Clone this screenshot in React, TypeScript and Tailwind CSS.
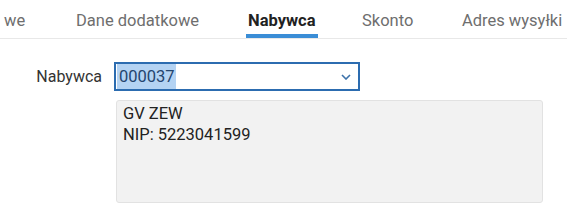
import * as React from "react";

const tabs = [
  { label: "Dane dodatkowe", width: "w-[172px]", active: false },
  { label: "Nabywca", width: "w-[114px]", active: true },
  { label: "Skonto", width: "w-[100px]", active: false },
  { label: "Adres wysyłki", width: "w-[105px]", active: false },
];

export default function App() {
  return (
    <div className="h-[213px] w-[567px] overflow-hidden bg-white font-['Roboto',sans-serif] text-[16.5px]">
      <div className="flex overflow-hidden whitespace-nowrap border-b border-[#e8e8e8]">
        <div className="w-[76px] shrink-0 pl-[4px]">
          <Tab label="we" />
        </div>
        {tabs.map((t) => (
          <div key={t.label} className={t.width + " shrink-0"}>
            <Tab label={t.label} active={t.active} />
          </div>
        ))}
      </div>

      <div className="mt-[23px]">
        <div className="flex items-center">
          <div className="w-[114px] shrink-0 pr-[12px] text-right text-[16px] text-[#333]">Nabywca</div>
          <div className="flex h-[29px] w-[246px] items-center border-2 border-[#2c6cb0] bg-white pl-[1px] pr-[7px]">
            <span className="bg-[#b4d3f3] pl-[2px] pr-[1px] leading-[25px] text-[#24456f]">000037</span>
            <span className="flex-1" />
            <svg width="10" height="6" viewBox="0 0 10 6" className="text-[#3d72aa]">
              <polyline points="1,1 5,5 9,1" fill="none" stroke="currentColor" strokeWidth="1.6" />
            </svg>
          </div>
        </div>
        <div className="ml-[116px] mt-[9px] h-[103px] w-[427px] rounded-[3px] border border-[#e2e2e2] bg-[#f2f2f2] px-[6px] pt-[2px] leading-[21px] text-[#222]">
          <div>GV ZEW</div>
          <div>NIP: 5223041599</div>
        </div>
      </div>
    </div>
  );
}

function Tab({ label, active = false }: { label: string; active?: boolean }) {
  return (
    <div className="inline-flex flex-col">
      <div
        className={
          "pt-[11px] leading-[20px] " +
          (active ? "font-bold text-[#222]" : "text-[#6e6e6e]")
        }
      >
        {label}
      </div>
      <div className={"-mx-[2px] mt-[3px] h-[4px] " + (active ? "bg-[#3a8dd6]" : "bg-transparent")} />
    </div>
  );
}
